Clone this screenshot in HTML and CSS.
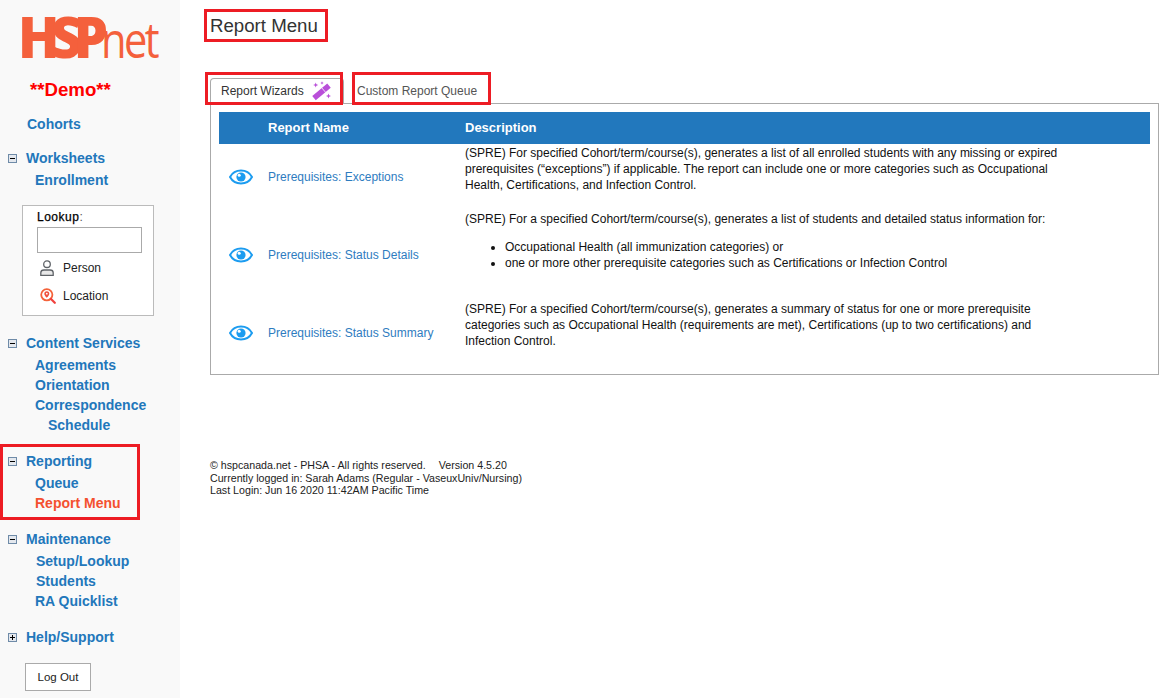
FILE: index.html
```html
<!DOCTYPE html>
<html lang="en">
<head>
<meta charset="utf-8">
<title>Report Menu</title>
<link rel="stylesheet" href="styles.css">
</head>
<body>
<div class="page">
  <aside class="sidebar">
    <div class="logo"><span class="logo-hsp">HSP</span><span class="logo-net">net</span></div>
    <div class="demo">**Demo**</div>
    <a class="top-link">Cohorts</a>
    <section class="group group-ws">
      <div class="head"><svg class="toggle" viewBox="0 0 9 9"><rect x=".5" y=".5" width="8" height="8" fill="#e4e8ee" stroke="#6f8ba8"/><path d="M2 4.500h5" stroke="#000"/></svg><a>Worksheets</a></div>
      <a class="sub">Enrollment</a>
    </section>
    <div class="lookup">
      <label class="lookup-label">Lookup<span class="colon">:</span></label>
      <input class="lookup-input" type="text">
      <div class="lookup-opt opt-person">
        <svg class="opt-icon" viewBox="0 0 16 16" fill="none" stroke="#5f6368" stroke-width="1.300"><circle cx="7" cy="4.200" r="3.300"/><path d="M.8 15.400v-2.600C.8 10.800 2.300 10 4 10h6c1.700 0 3.200.8 3.200 2.800v2.600z" fill="#e8e8e8"/></svg>
        <span>Person</span>
      </div>
      <div class="lookup-opt opt-location">
        <svg class="opt-icon" viewBox="0 0 16 16" fill="none"><circle cx="6.800" cy="6.800" r="5.600" stroke="#f4623a" stroke-width="1.800"/><path d="M10.800 10.800l4 4" stroke="#f0403c" stroke-width="2.200" stroke-linecap="round"/><path d="M6.800 3.200a2.500 2.500 0 0 1 2.500 2.500c0 1.700-2.500 4-2.500 4s-2.500-2.300-2.500-4a2.500 2.500 0 0 1 2.500-2.500z" fill="#f0503c"/><circle cx="6.800" cy="5.700" r=".9" fill="#fff"/></svg>
        <span>Location</span>
      </div>
    </div>
    <section class="group group-cs">
      <div class="head"><svg class="toggle" viewBox="0 0 9 9"><rect x=".5" y=".5" width="8" height="8" fill="#e4e8ee" stroke="#6f8ba8"/><path d="M2 4.500h5" stroke="#000"/></svg><a>Content Services</a></div>
      <a class="sub">Agreements</a>
      <a class="sub">Orientation</a>
      <a class="sub">Correspondence</a>
      <a class="sub sub-deep">Schedule</a>
    </section>
    <section class="group group-marked">
      <span class="mark mark-reporting"></span>
      <div class="head"><svg class="toggle" viewBox="0 0 9 9"><rect x=".5" y=".5" width="8" height="8" fill="#e4e8ee" stroke="#6f8ba8"/><path d="M2 4.500h5" stroke="#000"/></svg><a>Reporting</a></div>
      <a class="sub">Queue</a>
      <a class="sub active">Report Menu</a>
    </section>
    <section class="group">
      <div class="head"><svg class="toggle" viewBox="0 0 9 9"><rect x=".5" y=".5" width="8" height="8" fill="#e4e8ee" stroke="#6f8ba8"/><path d="M2 4.500h5" stroke="#000"/></svg><a>Maintenance</a></div>
      <a class="sub sub-shift">Setup/Lookup</a>
      <a class="sub sub-shift">Students</a>
      <a class="sub">RA Quicklist</a>
    </section>
    <section class="group">
      <div class="head"><svg class="toggle" viewBox="0 0 9 9"><rect x=".5" y=".5" width="8" height="8" fill="#e4e8ee" stroke="#6f8ba8"/><path d="M2 4.500h5M4.500 2v5" stroke="#000"/></svg><a>Help/Support</a></div>
    </section>
    <button class="logout" type="button">Log Out</button>
  </aside>

  <main class="main">
    <div class="title-row"><h1 class="title">Report Menu</h1></div>
    <nav class="tabs">
      <span class="mark mark-tab1"></span>
      <span class="mark mark-tab2"></span>
      <a class="tab tab-active">Report Wizards
        <svg class="wand" viewBox="0 0 20 20"><path d="M2 17.200L17 4.600" stroke="#b94fd9" stroke-width="5.500"/><path d="M9.200 6.200L14 11.800" stroke="#fff" stroke-width=".8"/><path d="M3.700 1.500l.7 1.800 1.800.7-1.800.7-.7 1.800-.7-1.800L1.200 4l1.800-.7zM16.500 12.500l.7 1.800 1.800.7-1.800.7-.7 1.800-.7-1.800-1.800-.7 1.800-.7zM10 .3l.5 1.200 1.200.5-1.200.5-.5 1.200-.5-1.200-1.200-.5 1.200-.5z" fill="#b94fd9"/></svg>
      </a>
      <a class="tab tab-plain">Custom Report Queue</a>
    </nav>
    <div class="panel">
      <table class="report-table">
        <colgroup><col class="col-icon"><col class="col-name"><col class="col-desc"></colgroup>
        <thead>
          <tr><th></th><th>Report Name</th><th>Description</th></tr>
        </thead>
        <tbody>
          <tr>
            <td class="cell-icon"><svg class="eye" viewBox="0 0 24 16"><path d="M12 1.500C6.800 1.500 2.800 4.700 1 8c1.800 3.300 5.800 6.500 11 6.500S21.200 11.300 23 8c-1.800-3.300-5.800-6.500-11-6.500z" fill="none" stroke="#1c9cf0" stroke-width="2"/><circle cx="12" cy="8" r="4.600" fill="#1c9cf0"/><circle cx="10.200" cy="6.300" r="1.500" fill="#fff"/></svg></td>
            <td class="cell-name"><a>Prerequisites: Exceptions</a></td>
            <td class="cell-desc"><p>(SPRE) For specified Cohort/term/course(s), generates a list of all enrolled students with any missing or expired prerequisites (“exceptions”) if applicable. The report can include one or more categories such as Occupational Health, Certifications, and Infection Control.</p></td>
          </tr>
          <tr>
            <td class="cell-icon"><svg class="eye" viewBox="0 0 24 16"><path d="M12 1.500C6.800 1.500 2.800 4.700 1 8c1.800 3.300 5.800 6.500 11 6.500S21.200 11.300 23 8c-1.800-3.300-5.800-6.500-11-6.500z" fill="none" stroke="#1c9cf0" stroke-width="2"/><circle cx="12" cy="8" r="4.600" fill="#1c9cf0"/><circle cx="10.200" cy="6.300" r="1.500" fill="#fff"/></svg></td>
            <td class="cell-name"><a>Prerequisites: Status Details</a></td>
            <td class="cell-desc"><p>(SPRE) For a specified Cohort/term/course(s), generates a list of students and detailed status information for:</p>
              <ul><li>Occupational Health (all immunization categories) or</li><li>one or more other prerequisite categories such as Certifications or Infection Control</li></ul></td>
          </tr>
          <tr>
            <td class="cell-icon"><svg class="eye" viewBox="0 0 24 16"><path d="M12 1.500C6.800 1.500 2.800 4.700 1 8c1.800 3.300 5.800 6.500 11 6.500S21.200 11.300 23 8c-1.800-3.300-5.800-6.500-11-6.500z" fill="none" stroke="#1c9cf0" stroke-width="2"/><circle cx="12" cy="8" r="4.600" fill="#1c9cf0"/><circle cx="10.200" cy="6.300" r="1.500" fill="#fff"/></svg></td>
            <td class="cell-name"><a>Prerequisites: Status Summary</a></td>
            <td class="cell-desc"><p>(SPRE) For a specified Cohort/term/course(s), generates a summary of status for one or more prerequisite categories such as Occupational Health (requirements are met), Certifications (up to two certifications) and Infection Control.</p></td>
          </tr>
        </tbody>
      </table>
    </div>
    <footer class="footer">
      <div>© hspcanada.net - PHSA - All rights reserved. <span class="version">Version 4.5.20</span></div>
      <div>Currently logged in: Sarah Adams (Regular - VaseuxUniv/Nursing)</div>
      <div>Last Login: Jun 16 2020 11:42AM Pacific Time</div>
    </footer>
  </main>
</div>
</body>
</html>
```
FILE: styles.css
```css
* { box-sizing: border-box; }
html, body { margin: 0; height: 100%; background: #fff; overflow: hidden; }
body { font-family: "Liberation Sans", Arial, sans-serif; font-size: 12px; color: #111; }
.page { display: flex; height: 698px; }

/* sidebar */
.sidebar { flex: 0 0 180px; width: 180px; background: #f9f9f9; padding-top: 6px; display: flex; flex-direction: column; align-items: flex-start; }
.logo { display: block; width: 162px; height: 63px; margin-left: 18px; line-height: 60px; color: #f4603c; white-space: nowrap; font-family: "Open Sans", sans-serif; }
.logo-hsp { display: inline-block; font-size: 57px; font-weight: 800; letter-spacing: -9px; transform: scaleX(.95); transform-origin: 0 50%; margin-right: -3px; }
.logo-net { display: inline-block; font-size: 49px; font-weight: 400; letter-spacing: -3px; transform: scaleX(.85); transform-origin: 0 50%; }
.demo { margin: 9px 0 0 30px; height: 24px; line-height: 24px; font-size: 18.67px; font-weight: 700; color: #f00; }
.sidebar a { color: #2277bb; font-weight: 700; font-size: 14px; line-height: 20px; }
.top-link { display: block; margin: 12px 0 0 27px; height: 20px; }
.group { position: relative; margin-top: 16px; width: 100%; }
.group-ws { margin-top: 14px; }
.group-cs { margin-top: 17px; }
.head { display: flex; align-items: center; height: 20px; padding-left: 8px; margin-bottom: 2px; }
.toggle { width: 9px; height: 9px; margin-right: 9px; flex: none; }
.sub { display: block; height: 20px; padding-left: 35px; }
.sub-deep { padding-left: 48px; }
.sub-shift { padding-left: 36px; }
.sidebar a.active { color: #f4502f; }

.lookup { margin: 15px 0 0 22px; width: 132px; height: 111px; border: 1px solid #bbb; background: #fff; padding: 4px 0 0 14px; font-size: 12px; }
.lookup-label { display: block; height: 17px; line-height: 15px; font-size: 12px; letter-spacing: .5px; color: #000; -webkit-text-stroke: .25px #000; }
.colon { color: #555; -webkit-text-stroke: 0; }
.lookup-input { display: block; width: 105px; height: 26px; border: 1px solid #aaa; background: #fff; padding: 0; margin: 0; }
.lookup-opt { display: flex; align-items: center; height: 16px; padding-left: 3px; color: #222; }
.opt-person { margin-top: 7px; }
.opt-location { margin-top: 12px; }
.opt-icon { width: 16px; height: 16px; margin-right: 7px; flex: none; }
.logout { margin: 14px 0 0 25px; width: 66px; height: 28px; border: 1px solid #aaa; background: #fff; padding: 0; font: 11.5px "Liberation Sans", Arial, sans-serif; color: #222; }

/* annotations */
.mark { position: absolute; border: 3px solid #ed1c24; pointer-events: none; }
.mark-reporting { left: 0; top: -7px; width: 140px; height: 76px; }
.mark-tab1 { left: -5px; top: -6px; width: 138px; height: 33px; z-index: 2; }
.mark-tab2 { left: 142px; top: -6px; width: 139px; height: 33px; z-index: 2; }

/* main */
.main { flex: 1; padding: 9px 5px 0 30px; min-width: 0; }
.title-row { display: flex; }
.title { margin: 0 0 0 -6px; width: 124px; height: 33px; border: 3px solid #ed1c24; padding-left: 3px; font-size: 18.67px; font-weight: 400; line-height: 28px; color: #333; white-space: nowrap; }
.tabs { position: relative; display: flex; height: 26px; margin-top: 36px; z-index: 1; }
.tab { display: flex; align-items: center; height: 26px; font-size: 12px; }
.tab-active { width: 134px; padding: 0 0 2px 10px; background: #fff; border: 1px solid #aaa; border-bottom: 0; border-radius: 4px 4px 0 0; color: #333; justify-content: flex-start; gap: 8px; }
.tab-plain { margin-left: 13px; color: #555; }
.wand { width: 20px; height: 20px; flex: none; }
.panel { margin-top: -1px; height: 272px; border: 1px solid #aaa; padding: 8px 8px 0 8px; }
.report-table { width: 931px; border-collapse: collapse; table-layout: fixed; }
.col-icon { width: 49px; }
.col-name { width: 197px; }
.report-table th { background: #2278bd; color: #fff; font-size: 13px; font-weight: 700; text-align: left; height: 32px; padding: 0 0 1px; }
.report-table td { padding: 1px 0; vertical-align: middle; }
.cell-icon { text-align: left; }
.eye { display: block; width: 24px; height: 16px; margin-left: 10px; }
.cell-name a { color: #2e7cbf; font-size: 12px; }
.cell-desc { font-size: 12px; line-height: 16px; color: #111; padding-right: 85px !important; }
.cell-desc p { margin: 0 0 16px; }
.cell-desc ul { margin: -4px 0 28px; padding-left: 40px; }

.footer { margin-top: 84px; font-size: 10.67px; line-height: 12.5px; color: #222; }
.version { margin-left: 10px; }
```
